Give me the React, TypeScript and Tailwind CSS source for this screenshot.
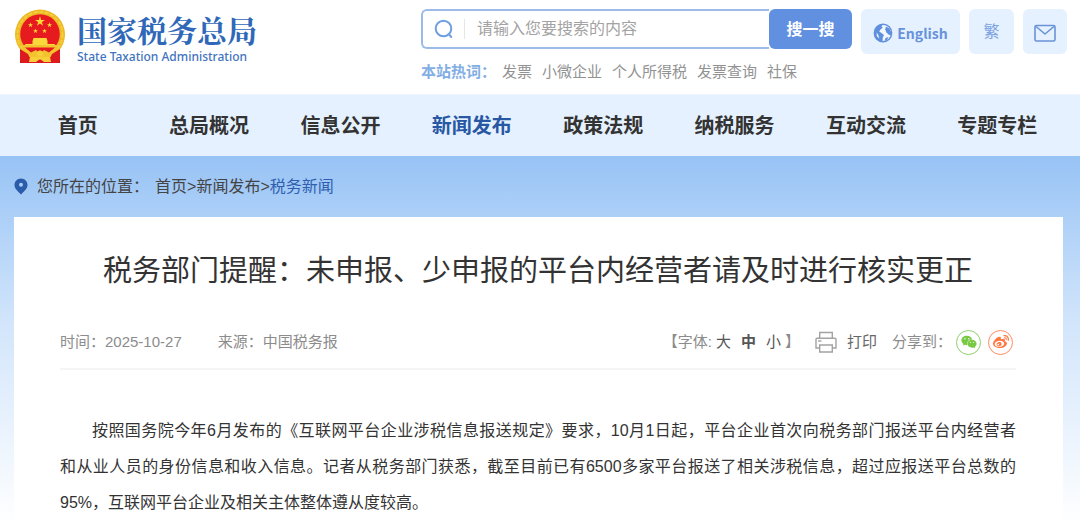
import React, { useState } from 'react';
import { FaWeibo, FaWeixin } from 'react-icons/fa';

interface NavItem {
  label: string;
  active?: boolean;
}

const navItems: NavItem[] = [
  { label: '首页' },
  { label: '总局概况' },
  { label: '信息公开' },
  { label: '新闻发布', active: true },
  { label: '政策法规' },
  { label: '纳税服务' },
  { label: '互动交流' },
  { label: '专题专栏' },
];

const hotWords = ['发票', '小微企业', '个人所得税', '发票查询', '社保'];

const STAR = '0,-1 0.2245,-0.309 0.9511,-0.309 0.3633,0.118 0.5878,0.809 0,0.382 -0.5878,0.809 -0.3633,0.118 -0.9511,-0.309 -0.2245,-0.309';

const Emblem: React.FC = () => (
  <svg viewBox="0 0 52 56" className="h-14 w-[52px] shrink-0" aria-hidden="true">
    <path d="M8 36 L6 46 L6 54 L26 54 L46 54 L46 46 L44 36 Z" fill="#dc1a20" />
    <circle cx="26" cy="25.5" r="25" fill="#ecba24" />
    <circle cx="26" cy="25.5" r="22.5" fill="none" stroke="#f5cd3c" strokeWidth="2" strokeDasharray="4 1.5" />
    <circle cx="26" cy="25" r="19.8" fill="#e71a1f" />
    <g fill="#fbd83a">
      <polygon points={STAR} transform="translate(26 12.5) scale(5.2)" />
      <polygon points={STAR} transform="translate(16.5 16) scale(2.8)" />
      <polygon points={STAR} transform="translate(35.5 16) scale(2.8)" />
      <polygon points={STAR} transform="translate(21.5 22) scale(2.6)" />
      <polygon points={STAR} transform="translate(30.5 22) scale(2.6)" />
      <path d="M19.5 29 h13 l1 3 v3 h7 l2 3 H9.500 l2 -3 h7 v-3 Z" />
    </g>
    <path d="M8 36 H44 L44 41 L36 48 H16 L8 41 Z" fill="#f2c32f" />
    <path d="M11 38.500 H41 L35 43.500 L30 41 L26 45 L22 41 L17 43.500 Z" fill="#e71a1f" />
    <path d="M6 40 L14 45 L18 54 L6 54 Z M46 40 L38 45 L34 54 L46 54 Z" fill="#dc1a20" />
    <path d="M16 48 H36 L37 53 H30 L26 50 L22 53 H15 Z" fill="#f6cf3a" />
    <circle cx="26" cy="44.500" r="3" fill="#f6cf3a" />
  </svg>
);

const SearchIcon: React.FC = () => (
  <svg viewBox="0 0 20 20" className="h-5 w-5 shrink-0" fill="none" stroke="#6f9fe0" strokeWidth="2" strokeLinecap="round" aria-hidden="true">
    <circle cx="9.5" cy="9.5" r="7.8" />
    <path d="M14.8 15.2 L17.2 18" />
  </svg>
);

const GlobeIcon: React.FC = () => (
  <svg viewBox="0 0 20 20" className="h-5 w-5 shrink-0" aria-hidden="true">
    <circle cx="10" cy="10" r="8.7" fill="#f1f7ff" stroke="#5f90dd" strokeWidth="1.4" />
    <g fill="#5f90dd">
      <path d="M10 1.2 L8.500 3.200 L9.800 4.500 L7.500 6.500 L6.200 8.500 L8.500 10 L11 12 L9.800 14.500 L9.500 18.700 C5 18.500 1.300 15 1.300 10 C1.300 5 5.200 1.200 10 1.200 Z" />
      <path d="M13 3.500 L16.500 5.500 L18.300 9.500 L17.800 12.500 L15.500 11.500 L13.500 9.500 L12.200 6.500 Z" />
      <path d="M12.500 15 L15.500 14 L14 17 L11.500 18 Z" />
    </g>
    <path d="M3.500 9.500 L5 11.500 L6.500 15.500 L4 13.500 Z" fill="#f1f7ff" />
  </svg>
);

const MailIcon: React.FC = () => (
  <svg viewBox="0 0 22 18" className="h-[18px] w-[22px]" fill="none" stroke="#6993d6" strokeWidth="1.6" strokeLinejoin="round" aria-hidden="true">
    <rect x="1" y="1.5" width="20" height="15.5" rx="1.5" />
    <path d="M2 2.5 L11 10 L20 2.5" />
  </svg>
);

const PinIcon: React.FC = () => (
  <svg viewBox="0 0 14 17" className="h-[17px] w-[14px] shrink-0" aria-hidden="true">
    <path d="M7 0.5 C3.2 0.5 0.5 3.4 0.5 6.9 C0.5 10.8 4.3 13.4 7 16.5 C9.7 13.4 13.5 10.8 13.5 6.9 C13.5 3.4 10.8 0.5 7 0.5 Z" fill="#2b5ca9" />
    <circle cx="7" cy="6.8" r="2" fill="#a9cdf7" />
  </svg>
);

const PrintIcon: React.FC = () => (
  <svg viewBox="0 0 22 22" className="h-[22px] w-[22px]" fill="none" stroke="#a3a3a3" strokeWidth="1.4" aria-hidden="true">
    <path d="M4.7 7 V1.500 H17.300 V7" />
    <path d="M4.700 17 H1 V8.200 Q1 7.200 2 7.200 H20 Q21 7.200 21 8.200 V17 H17.300" />
    <path d="M4.700 14 H17.300 V21 H4.700 Z" />
    <path d="M3 10 H6.500" />
  </svg>
);

const Header: React.FC = () => (
  <header className="flex h-[95px] items-start justify-between border-b border-[#edf4fd] bg-white pl-3.5 pr-[13px] pt-[9px]">
    <a href="#" className="flex items-start gap-[11px] text-[#2f68b8]">
      <Emblem />
      <span className="flex flex-col pt-0.5">
        <span className="font-['Noto_Serif_CJK_SC','Noto_Sans_CJK_SC',serif] text-[30px] font-bold leading-9">国家税务总局</span>
        <span className="font-['Noto_Sans',sans-serif] text-xs font-medium leading-5 text-[#3f74c0]">State Taxation Administration</span>
      </span>
    </a>

    <div className="flex items-start gap-[9px]">
      <div className="w-[431px]">
        <form className="flex h-10" onSubmit={(e) => e.preventDefault()}>
          <label htmlFor="search" className="flex flex-1 items-center rounded-l-md border-2 border-r-0 border-[#9dbbe8] pl-[11px]">
            <SearchIcon />
            <span className="ml-2.5 h-5 w-px bg-[#e6e6e6]" />
            <input
              id="search"
              type="text"
              aria-label="搜索"
              placeholder="请输入您要搜索的内容"
              className="ml-3 w-full min-w-0 flex-1 bg-transparent text-base text-gray-700 outline-none placeholder:text-[#a3a3a3]"
            />
          </label>
          <button type="submit" className="w-[83px] rounded-md bg-[#6090df] pt-0.5 text-base font-bold text-white">
            搜一搜
          </button>
        </form>
        <div className="mt-3 flex gap-2.5 text-[15px] leading-[22px] text-[#929292]">
          <span className="-mr-1 font-bold text-[#82aee4]">本站热词：</span>
          {hotWords.map((word) => (
            <a key={word} href="#">{word}</a>
          ))}
        </div>
      </div>
      <a href="#" className="flex h-[45px] w-[99px] items-center justify-center gap-1 rounded-md bg-[#e5f1ff] pt-0.5 font-['Noto_Sans_CJK_SC',sans-serif] text-sm font-bold text-[#6792dc]">
        <GlobeIcon />
        English
      </a>
      <button type="button" className="h-[45px] w-[45px] rounded-md bg-[#e5f1ff] text-base text-[#7ba1e0]">
        繁
      </button>
      <a href="#" aria-label="邮箱" className="flex h-[45px] w-11 items-center justify-center rounded-md bg-[#e5f1ff] pt-[3px]">
        <MailIcon />
      </a>
    </div>
  </header>
);

const NavBar: React.FC = () => (
  <nav className="grid h-[61px] grid-cols-8 items-center bg-[#e5f1ff] pl-3 pr-[17px] text-center text-xl font-bold text-[#333]">
    {navItems.map((item) => (
      <a key={item.label} href="#" className={item.active ? 'text-[#2857a4]' : ''}>
        {item.label}
      </a>
    ))}
  </nav>
);

const sizes = ['大', '中', '小'];

const ArticleMeta: React.FC = () => {
  const [size, setSize] = useState('中');

  return (
    <div className="flex h-[54px] items-center justify-between border-b-2 border-[#f5f5f5] text-[15px] text-[#8c8c8c]">
      <div className="flex gap-9">
        <span>时间：2025-10-27</span>
        <span>来源：中国税务报</span>
      </div>
      <div className="flex items-center pr-[3px]">
        <span>【字体:</span>
        <span className="mx-1 flex gap-2.5 text-[#555]">
          {sizes.map((s) => (
            <button key={s} type="button" onClick={() => setSize(s)} className={s === size ? 'font-bold' : ''}>
              {s}
            </button>
          ))}
        </span>
        <span>】</span>
        <button type="button" className="ml-[15px] flex items-center gap-2.5 text-[#666]">
          <PrintIcon />
          打印
        </button>
        <span className="ml-[15px]">分享到：</span>
        <a href="#" aria-label="微信" className="ml-1 flex h-[25px] w-[25px] items-center justify-center rounded-full border border-[#8fd06a] text-[#7ac943]">
          <FaWeixin size={16} />
        </a>
        <a href="#" aria-label="微博" className="ml-[7px] flex h-[25px] w-[25px] items-center justify-center rounded-full border border-[#ff8a63] text-[#ff763f]">
          <FaWeibo size={16} />
        </a>
      </div>
    </div>
  );
};

const App: React.FC = () => {
  return (
    <div className="flex min-h-screen flex-col bg-white font-['Liberation_Sans','Noto_Sans_CJK_SC',sans-serif]">
      <Header />
      <NavBar />
      <main className="flex flex-1 flex-col bg-linear-to-b from-[#97c3f5] via-[#d2e5fb] via-45% to-white pl-3.5 pr-[17px]">
        <div className="flex h-[61px] items-center text-base text-[#444]">
          <PinIcon />
          <span className="ml-[9px]">您所在的位置：</span>
          <span className="ml-1.5">
            <a href="#">首页</a>&gt;<a href="#">新闻发布</a>&gt;<a href="#" className="text-[#2f5fae]">税务新闻</a>
          </span>
        </div>
        <article className="flex-1 bg-white pl-[46px] pr-[47px] pt-[33px]">
          <h1 className="text-center text-[29px] leading-[42px] text-[#333]">
            税务部门提醒：未申报、少申报的平台内经营者请及时进行核实更正
          </h1>
          <div className="mt-6">
            <ArticleMeta />
          </div>
          <p className="mt-[43px] text-justify indent-8 text-base leading-9 text-[#333]">
            按照国务院今年6月发布的《互联网平台企业涉税信息报送规定》要求，10月1日起，平台企业首次向税务部门报送平台内经营者<span className="whitespace-nowrap">和从业人员</span>的身份信息和收入信息。记者从税务部门获悉，截至目前已有6500多家平台报送了相关涉税信息，超过应报送平台总数的95%，互联网平台企业及相关主体整体遵从度较高。
          </p>
        </article>
      </main>
    </div>
  );
};

export default App;
